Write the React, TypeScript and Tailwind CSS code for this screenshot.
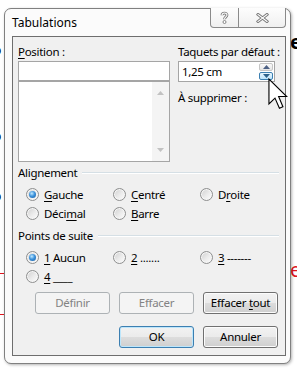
import React from 'react';

const U = ({ children }: { children: React.ReactNode }) => (
  <span className="underline decoration-1 underline-offset-2">{children}</span>
);

const Radio = ({ checked = false }: { checked?: boolean }) => (
  <span className="flex h-[13px] w-[13px] shrink-0 items-center justify-center rounded-full border border-[#8e8f8f] bg-[linear-gradient(135deg,#cfcfcf,#ececec_55%,#fdfdfd)] shadow-[inset_0_0_0_1px_#f6f6f6]">
    {checked && (
      <span className="h-[7px] w-[7px] rounded-full bg-[radial-gradient(circle_at_40%_35%,#c4ebff_0%,#3d93dc_45%,#155a9f_100%)]" />
    )}
  </span>
);

const Option = ({ checked, children }: { checked?: boolean; children: React.ReactNode }) => (
  <div className="flex items-center gap-[5px]">
    <Radio checked={checked} />
    <span>{children}</span>
  </div>
);

const GroupTitle = ({ title }: { title: string }) => (
  <div className="flex h-4 items-center gap-[5px] pl-[5px] pr-[6px]">
    <span>{title}</span>
    <div className="h-[2px] flex-1 border-t border-b border-t-[#d5dfe5] border-b-white" />
  </div>
);

type BtnProps = { children: React.ReactNode; kind?: 'normal' | 'disabled' | 'default' };

const Btn = ({ children, kind = 'normal' }: BtnProps) => {
  const look =
    kind === 'disabled'
      ? 'border-[#adb2b5] bg-[#f4f4f4] text-[#838383]'
      : kind === 'default'
        ? 'border-[#3c7fb1] bg-[linear-gradient(#f2f2f2,#ebebeb_50%,#dddddd_50%,#cfcfcf)] shadow-[inset_0_0_0_1px_#bde6fb]'
        : 'border-[#707070] bg-[linear-gradient(#f2f2f2,#ebebeb_50%,#dddddd_50%,#cfcfcf)] shadow-[inset_0_0_0_1px_#fcfcfc]';
  return (
    <div className={`flex h-[22px] w-[75px] items-center justify-center rounded-[3px] border ${look}`}>
      <span>{children}</span>
    </div>
  );
};

const Tri = ({ up, color }: { up?: boolean; color: string }) => (
  <svg width="7" height="4" viewBox="0 0 7 4">
    <path d={up ? 'M0 4 L3.5 0 L7 4 Z' : 'M0 0 L7 0 L3.5 4 Z'} fill={color} />
  </svg>
);

export default function App() {
  return (
    <div className="relative h-[369px] w-[297px] overflow-hidden bg-white pl-[4px] pt-[8px] font-['Noto_Sans'] text-[11.5px] leading-4 tracking-[-0.3px] text-black">
      {/* page bits behind the dialog */}
      <span className="absolute left-[-8px] top-[41px] text-[15px] font-bold">o</span>
      <span className="absolute left-[-8px] top-[127px] text-[15px] font-bold">o</span>
      <span className="absolute left-[-8px] top-[187px] text-[15px] font-bold">o</span>
      <span className="absolute left-[290px] top-[34px] text-[20px] font-bold">e</span>
      <span className="absolute left-[290px] top-[262px] text-[20px] text-[#e0141e]">e</span>
      <div className="absolute left-0 top-[273px] h-[1px] w-[4px] bg-[#e0141e]" />
      <div className="absolute left-0 top-[314px] h-[1px] w-[4px] bg-[#e0141e]" />

      <div className="relative flex h-[356px] w-[287px] flex-col rounded-[7px] border border-[#808080] bg-[#fbfbfb] pb-[7px] pl-[7px] pr-[4px] shadow-[1px_1px_3px_rgba(0,0,0,0.3)]">
        {/* title bar */}
        <div className="flex h-[27px] items-center text-[12px] tracking-normal">Tabulations</div>
        <div className="absolute right-[4px] top-[-1px] flex h-[20px] overflow-hidden rounded-b-[4px] border border-t-0 border-[#8a8a8a] bg-[linear-gradient(#fdfdfd,#f0f0f0)]">
          <div className="flex w-[28px] items-center justify-center border-r border-[#8a8a8a]">
            <svg width="9" height="13" viewBox="0 0 9 13">
              <path d="M2 4.2 C2 1.4 7 1.4 7 4 C7 5.8 4.5 6 4.5 8.2" fill="none" stroke="#7a7a7a" strokeWidth="2.8" />
              <path d="M2 4.2 C2 1.4 7 1.4 7 4 C7 5.8 4.5 6 4.5 8.2" fill="none" stroke="#ffffff" strokeWidth="1.1" />
              <circle cx="4.5" cy="11" r="1.5" fill="#ffffff" stroke="#7a7a7a" strokeWidth="0.9" />
            </svg>
          </div>
          <div className="flex w-[46px] items-center justify-center">
            <svg width="13" height="10" viewBox="0 0 13 10">
              <path d="M2 1.5 L11 8.5 M11 1.5 L2 8.5" stroke="#7a7a7a" strokeWidth="3" strokeLinecap="square" />
              <path d="M2 1.5 L11 8.5 M11 1.5 L2 8.5" stroke="#ffffff" strokeWidth="1.1" strokeLinecap="square" />
            </svg>
          </div>
        </div>

        {/* client area */}
        <div className="flex h-[320px] flex-col border border-[#6e6e6e] bg-[#f0f0f0]">
          <div className="flex gap-[8px] pl-[5px] pt-[7px]">
            <div className="flex w-[152px] flex-col">
              <div className="h-4">
                <U>P</U>osition :
              </div>
              <div className="mt-px h-5 border border-[#a5a5a5] bg-white" />
              <div className="flex h-[81px] border border-[#a5a5a5] bg-white">
                <div className="flex-1" />
                <div className="flex w-[17px] flex-col items-center justify-between bg-[#f4f4f4] py-[9px]">
                  <Tri up color="#c2c2c2" />
                  <Tri color="#c2c2c2" />
                </div>
              </div>
            </div>
            <div className="flex flex-col">
              <div className="h-4 whitespace-nowrap">Taquets par défaut :</div>
              <div className="mt-px flex h-[21px] w-[97px] items-stretch border border-[#a5a5a5] bg-white">
                <div className="flex flex-1 items-center pl-[3px]">1,25 cm</div>
                <div className="flex w-[15px] flex-col gap-px py-px pr-px">
                  <div className="flex flex-1 items-center justify-center rounded-[2px] border border-[#c5c5c5] bg-[linear-gradient(#fafafa,#e6e6e6)]">
                    <Tri up color="#4d6185" />
                  </div>
                  <div className="flex flex-1 items-center justify-center rounded-[2px] border border-[#3c7fb1] bg-[linear-gradient(#eaf6fd,#bee6fd)]">
                    <Tri color="#2c628b" />
                  </div>
                </div>
              </div>
              <div className="mt-[8px] h-4">À supprimer :</div>
            </div>
          </div>

          <div className="mt-[3px]">
            <GroupTitle title="Alignement" />
          </div>
          <div className="mt-[4px] grid grid-cols-[87px_87px_1fr] pl-[13px]">
            <div className="flex h-[19px] items-center">
              <Option checked>
                <U>G</U>auche
              </Option>
            </div>
            <div className="flex h-[19px] items-center">
              <Option>
                <U>C</U>entré
              </Option>
            </div>
            <div className="flex h-[19px] items-center">
              <Option>
                D<U>r</U>oite
              </Option>
            </div>
            <div className="flex h-[19px] items-center">
              <Option>
                Déci<U>m</U>al
              </Option>
            </div>
            <div className="flex h-[19px] items-center">
              <Option>
                <U>B</U>arre
              </Option>
            </div>
          </div>

          <div className="mt-[5px]">
            <GroupTitle title="Points de suite" />
          </div>
          <div className="mt-[4px] grid grid-cols-[87px_87px_1fr] pl-[13px]">
            <div className="flex h-[19px] items-center">
              <Option checked>
                <U>1</U> Aucun
              </Option>
            </div>
            <div className="flex h-[19px] items-center">
              <Option>
                <U>2</U> .......
              </Option>
            </div>
            <div className="flex h-[19px] items-center">
              <Option>
                <U>3</U> -------
              </Option>
            </div>
            <div className="flex h-[19px] items-center">
              <Option>
                <U>4</U> ____
              </Option>
            </div>
          </div>

          <div className="mt-[6px] flex justify-end gap-[9px] pr-[7px]">
            <Btn kind="disabled">Définir</Btn>
            <Btn kind="disabled">Effacer</Btn>
            <Btn>
              Effacer <U>t</U>out
            </Btn>
          </div>
          <div className="mt-[12px] flex justify-end gap-[9px] pr-[7px]">
            <Btn kind="default">OK</Btn>
            <Btn>Annuler</Btn>
          </div>
        </div>
      </div>

      {/* mouse pointer over the spin button */}
      <svg className="absolute left-[268px] top-[78px]" width="20" height="32" viewBox="0 0 12.6 20">
        <path
          d="M0.6 0.6 L0.6 16.2 L4.4 12.6 L7.2 19 L9.4 18 L6.7 11.6 L11.8 11.6 Z"
          fill="#ffffff"
          stroke="#000000"
          strokeWidth="0.7"
          strokeLinejoin="miter"
        />
      </svg>
    </div>
  );
}
